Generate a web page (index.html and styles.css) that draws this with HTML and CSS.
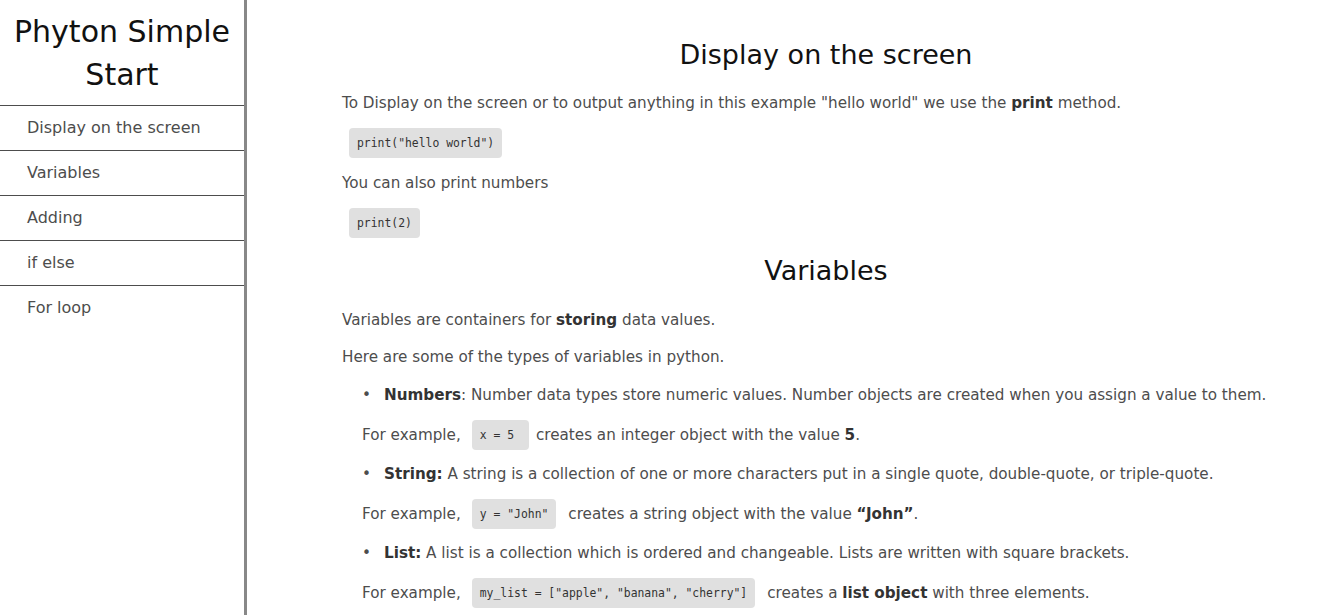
FILE: index.html
```html
<!DOCTYPE html>
<html lang="en">
<head>
<meta charset="utf-8">
<title>Phyton Simple Start</title>
<link rel="stylesheet" href="styles.css">
</head>
<body>
<aside class="sidebar">
  <header class="brand">Phyton Simple Start</header>
  <nav class="nav">
    <a class="nav-link" href="#display">Display on the screen</a>
    <a class="nav-link" href="#variables">Variables</a>
    <a class="nav-link" href="#adding">Adding</a>
    <a class="nav-link" href="#ifelse">if else</a>
    <a class="nav-link" href="#forloop">For loop</a>
  </nav>
</aside>
<main class="main">
  <section class="section" id="display">
    <h2 class="section-title title-first">Display on the screen</h2>
    <p class="text">To Display on the screen or to output anything in this example "hello world" we use the <b>print</b> method.</p>
    <div class="code-block"><code class="code">print("hello world")</code></div>
    <p class="text">You can also print numbers</p>
    <div class="code-block"><code class="code">print(2)</code></div>
  </section>
  <section class="section" id="variables">
    <h2 class="section-title">Variables</h2>
    <p class="text">Variables are containers for <b>storing</b> data values.</p>
    <p class="text">Here are some of the types of variables in python.</p>
    <ul class="types">
      <li class="type"><b>Numbers</b>: Number data types store numeric values. Number objects are created when you assign a value to them.</li>
      <li class="example"><span>For example,</span><code class="code inline tight">x = 5 </code><span>creates an integer object with the value <b>5</b>.</span></li>
      <li class="type"><b>String:</b> A string is a collection of one or more characters put in a single quote, double-quote, or triple-quote.</li>
      <li class="example"><span>For example,</span><code class="code inline">y = "John"</code><span>creates a string object with the value <b>“John”</b>.</span></li>
      <li class="type"><b>List:</b> A list is a collection which is ordered and changeable. Lists are written with square brackets.</li>
      <li class="example"><span>For example,</span><code class="code inline">my_list = ["apple", "banana", "cherry"]</code><span>creates a <b>list object</b> with three elements.</span></li>
    </ul>
  </section>
</main>
</body>
</html>
```

FILE: styles.css
```css
* { box-sizing: border-box; }

html, body {
  margin: 0;
  padding: 0;
  height: 100%;
  overflow: hidden;
  background: #ffffff;
}

body {
  display: flex;
  font-family: "DejaVu Sans", "Liberation Sans", sans-serif;
  color: #4d4d4d;
}

.sidebar {
  width: 247px;
  flex: 0 0 247px;
  border-right: 3px solid #888888;
  min-height: 100vh;
}

.brand {
  font-size: 30px;
  line-height: 43px;
  color: #111111;
  text-align: center;
  padding: 10px 4px 9px;
}

.nav {
  display: flex;
  flex-direction: column;
}

.nav-link {
  display: block;
  height: 45px;
  line-height: 44px;
  border-top: 1px solid #4d4d4d;
  padding-left: 27px;
  font-size: 16px;
  color: #4d4d4d;
  text-decoration: none;
}

.main {
  flex: 1;
  padding: 0 28px 0 95px;
}

.section-title {
  margin: 16px 0 21px;
  font-size: 27px;
  line-height: 34px;
  font-weight: 400;
  color: #111111;
  text-align: center;
}

.title-first {
  margin-top: 38px;
  margin-bottom: 20px;
}

.text {
  margin: 0 0 15px;
  font-size: 15.2px;
  line-height: 22px;
}

b {
  color: #333333;
  font-weight: 700;
}

.code-block {
  display: flex;
  margin: -1px 0 14px 7px;
}

.code {
  display: inline-block;
  background: #e0e0e0;
  border-radius: 4px;
  padding: 8px 8px;
  font-family: "DejaVu Sans Mono", "Liberation Mono", monospace;
  font-size: 11.4px;
  line-height: 14px;
  color: #333333;
  white-space: pre;
}

.types {
  list-style: none;
  margin: 16px 0 0;
  padding: 0;
  font-size: 15.2px;
  line-height: 22px;
}

.type {
  padding-left: 42px;
  margin: 0 0 14px;
}

.type::before {
  content: "\2022";
  display: inline-block;
  width: 22px;
  margin-left: -22px;
  color: #4d4d4d;
}

.example {
  display: flex;
  align-items: center;
  height: 30px;
  padding-left: 20px;
  margin: 0 0 13px;
}

.code.inline {
  margin: 0 12px 0 11px;
}

.code.inline.tight {
  margin-right: 7px;
}
```
